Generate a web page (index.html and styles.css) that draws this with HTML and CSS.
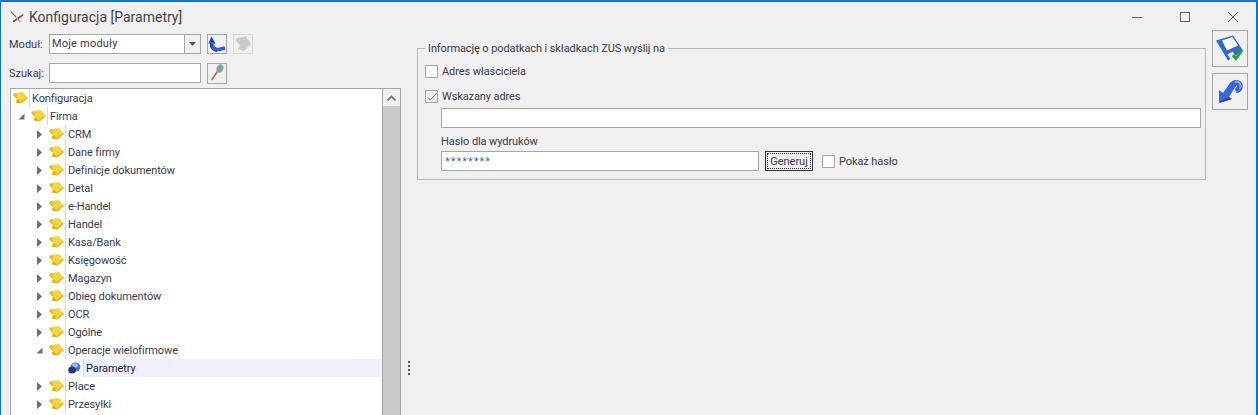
FILE: index.html
```html
<!DOCTYPE html>
<html lang="pl">
<head>
<meta charset="utf-8">
<title>Konfiguracja [Parametry]</title>
<link rel="stylesheet" href="styles.css">
</head>
<body>
<svg class="defs" width="0" height="0">
  <defs>
    <symbol id="folder" viewBox="0 0 15 12">
      <path d="M0 3 L2 1 L10 0 L15 6 L8.5 11.5 L3 10.5 L4 7 Z" fill="#f2d540"/>
      <path d="M0 3 L2 1 L3.5 2 L4 7 Z" fill="#d9bb3c"/>
      <path d="M3 10.5 L4 7 L5.5 8 L8.5 11.5 Z" fill="#cfae2e"/>
      <path d="M8.5 11.5 L15 6 L13.5 5 L8 9.5 Z" fill="#e2bf2c"/>
    </symbol>
    <symbol id="open" viewBox="0 0 7 7"><path d="M6.5 0.5 V6.5 H0.5 Z" fill="#6e6e6e"/></symbol>
    <symbol id="closed" viewBox="0 0 6 9"><path d="M0.5 0 L5.5 4.5 L0.5 9 Z" fill="#6e6e6e"/></symbol>
  </defs>
</svg>
<div class="window">
  <header class="titlebar">
    <svg class="app-icon" viewBox="0 0 14 14" width="14" height="14">
      <path d="M1 1 L6.5 6.5 L5.5 7.5 L0.5 2 Z" fill="#777"/>
      <path d="M2.5 11 L13 4 L13.5 5.5 L3.5 12.5 Z" fill="#84463a"/>
      <path d="M7 7.5 L11 11.5 L10 12.5 L6 8.5 Z" fill="#a89888"/>
    </svg>
    <span class="title">Konfiguracja [Parametry]</span>
    <div class="controls">
      <svg class="ctl" viewBox="0 0 10 10" width="10" height="10"><path d="M0 5.5 H10" stroke="#666" fill="none"/></svg>
      <svg class="ctl" viewBox="0 0 10 10" width="10" height="10"><rect x="0.5" y="0.5" width="9" height="9" stroke="#666" fill="none"/></svg>
      <svg class="ctl" viewBox="0 0 10 10" width="10" height="10"><path d="M0 0 L10 10 M10 0 L0 10" stroke="#666" fill="none"/></svg>
    </div>
  </header>
  <div class="content">
    <aside class="left">
      <div class="filter">
        <label class="flabel">Moduł:</label>
        <div class="combo"><span class="combo-text">Moje moduły</span><span class="combo-btn"><svg viewBox="0 0 7 4" width="7" height="4"><path d="M0 0 H7 L3.5 4 Z" fill="#555"/></svg></span></div>
        <button class="tool">
          <svg viewBox="0 0 18 18" width="18" height="18">
            <path d="M0.5 8.5 L3.5 1.5 L7.5 8.5 Z" fill="#1d3fa8"/>
            <path d="M3.8 7 C3.8 12.5 7 15 11 14.5 L17 13" stroke="#2f62d8" stroke-width="3.4" fill="none"/>
            <path d="M2.2 8 C2.4 13 5 16 9 16.4" stroke="#12286e" stroke-width="1.1" fill="none"/>
          </svg>
        </button>
        <button class="tool off">
          <svg viewBox="0 0 18 18" width="18" height="18"><path d="M1 5 L4 3 L12 1.5 L17 9 L10 16 L4 14 L6 10 Z" fill="#cacaca"/></svg>
        </button>
      </div>
      <div class="filter search">
        <label class="flabel">Szukaj:</label>
        <input class="field sfield" type="text">
        <button class="tool">
          <svg viewBox="0 0 18 20" width="18" height="20">
            <path d="M3.7 17 L9.7 8" stroke="#a5785a" stroke-width="1.7" fill="none"/>
            <ellipse cx="12" cy="5.5" rx="2.9" ry="3.8" transform="rotate(20 12 5.5)" fill="#55a9d0" stroke="#b9a468"/>
          </svg>
        </button>
      </div>
      <div class="tree">
        <div class="rows">
          <div class="row l0"><svg class="fold"><use href="#folder"/></svg><span class="txt">Konfiguracja</span></div>
          <div class="row l1"><svg class="arr"><use href="#open"/></svg><svg class="fold"><use href="#folder"/></svg><span class="txt">Firma</span></div>
          <div class="row l2"><svg class="arr"><use href="#closed"/></svg><svg class="fold"><use href="#folder"/></svg><span class="txt">CRM</span></div>
          <div class="row l2"><svg class="arr"><use href="#closed"/></svg><svg class="fold"><use href="#folder"/></svg><span class="txt">Dane firmy</span></div>
          <div class="row l2"><svg class="arr"><use href="#closed"/></svg><svg class="fold"><use href="#folder"/></svg><span class="txt">Definicje dokumentów</span></div>
          <div class="row l2"><svg class="arr"><use href="#closed"/></svg><svg class="fold"><use href="#folder"/></svg><span class="txt">Detal</span></div>
          <div class="row l2"><svg class="arr"><use href="#closed"/></svg><svg class="fold"><use href="#folder"/></svg><span class="txt">e-Handel</span></div>
          <div class="row l2"><svg class="arr"><use href="#closed"/></svg><svg class="fold"><use href="#folder"/></svg><span class="txt">Handel</span></div>
          <div class="row l2"><svg class="arr"><use href="#closed"/></svg><svg class="fold"><use href="#folder"/></svg><span class="txt">Kasa/Bank</span></div>
          <div class="row l2"><svg class="arr"><use href="#closed"/></svg><svg class="fold"><use href="#folder"/></svg><span class="txt">Księgowość</span></div>
          <div class="row l2"><svg class="arr"><use href="#closed"/></svg><svg class="fold"><use href="#folder"/></svg><span class="txt">Magazyn</span></div>
          <div class="row l2"><svg class="arr"><use href="#closed"/></svg><svg class="fold"><use href="#folder"/></svg><span class="txt">Obieg dokumentów</span></div>
          <div class="row l2"><svg class="arr"><use href="#closed"/></svg><svg class="fold"><use href="#folder"/></svg><span class="txt">OCR</span></div>
          <div class="row l2"><svg class="arr"><use href="#closed"/></svg><svg class="fold"><use href="#folder"/></svg><span class="txt">Ogólne</span></div>
          <div class="row l2"><svg class="arr"><use href="#open"/></svg><svg class="fold"><use href="#folder"/></svg><span class="txt">Operacje wielofirmowe</span></div>
          <div class="row l3">
            <svg class="leaf" viewBox="0 0 13 12" width="13" height="12">
              <ellipse cx="7.5" cy="5" rx="5" ry="4.5" fill="#4a74d8"/>
              <ellipse cx="7" cy="3.5" rx="3" ry="2.2" fill="#9db8f0"/>
              <ellipse cx="4" cy="8" rx="3.8" ry="3.5" fill="#1f3a80"/>
            </svg>
            <span class="txt sel">Parametry</span>
          </div>
          <div class="row l2"><svg class="arr"><use href="#closed"/></svg><svg class="fold"><use href="#folder"/></svg><span class="txt">Płace</span></div>
          <div class="row l2"><svg class="arr"><use href="#closed"/></svg><svg class="fold"><use href="#folder"/></svg><span class="txt">Przesyłki</span></div>
        </div>
        <div class="scroll">
          <div class="scroll-up"><svg viewBox="0 0 9 6" width="9" height="6"><path d="M0.5 5.5 L4.5 1.5 L8.5 5.5" stroke="#777" stroke-width="1.8" fill="none"/></svg></div>
        </div>
      </div>
    </aside>
    <div class="splitter"><i></i><i></i><i></i><i></i></div>
    <main class="right">
      <fieldset class="group">
        <legend class="legend">Informację o podatkach i składkach ZUS wyślij na</legend>
        <div class="check first"><span class="box"></span><span class="clabel">Adres właściciela</span></div>
        <div class="check second">
          <span class="box"><svg viewBox="0 0 12 12" width="12" height="12"><path d="M2 6.5 L4.5 9 L10.5 2" stroke="#777" fill="none"/></svg></span>
          <span class="clabel">Wskazany adres</span>
        </div>
        <input class="field wide" type="text">
        <div class="plabel">Hasło dla wydruków</div>
        <div class="pass-row">
          <input class="field pass" type="text" value="********">
          <button class="gen"><span class="gen-in">Generuj</span></button>
          <div class="check show"><span class="box"></span><span class="clabel">Pokaż hasło</span></div>
        </div>
      </fieldset>
      <div class="actions">
        <button class="act">
          <svg viewBox="0 0 30 30" width="30" height="30">
            <path d="M1 6.5 L18 1.5 L28 16.5 L13 26.5 Z" fill="#3566d6"/>
            <path d="M7 6.5 L17.5 3 L23 11.5 L12 16.5 Z" fill="#fff"/>
            <path d="M12.5 20.5 L17.5 17.5 L20.5 21.5 L15.5 25 Z" fill="#e8eefc"/>
            <path d="M18 21 L21 24.5 L27 16" stroke="#1fa82a" stroke-width="3" fill="none"/>
          </svg>
        </button>
        <button class="act">
          <svg viewBox="0 0 30 30" width="30" height="30">
            <path d="M4 26 L4 13 L8 16 L15 6 C18 2 25 2 27 6 C29 10 27 14 24 15.5 L21 16 L20 11 C22 11 23 8 21 9 L14 20 L17 22 Z" fill="#3a67d6"/>
            <path d="M20 4 C24 3 27 6 26.5 10 L24 13 L24.5 8 C24.5 6 22 5.5 20 6 Z" fill="#86a6ee"/>
            <path d="M4 26 L17 22 L14 20 L6 24 Z" fill="#2347a8"/>
          </svg>
        </button>
      </div>
    </main>
  </div>
</div>
</body>
</html>
```
FILE: styles.css
```css
* { box-sizing: border-box; }
html, body { margin: 0; padding: 0; height: 415px; overflow: hidden; }
body { font-family: Roboto, sans-serif; font-size: 11px; letter-spacing: -0.1px; color: #3a3a4a; background: #f0f0f0; }
.defs { display: block; height: 0; }
.window { height: 415px; border: 2px solid #0078d7; border-bottom: 0; border-left-width: 1px; background: #f0f0f0; overflow: hidden; }

.titlebar { display: flex; align-items: center; height: 29px; padding-left: 9px; }
.app-icon { margin-right: 5px; }
.title { font-size: 14px; letter-spacing: 0; color: #444; }
.controls { margin-left: auto; display: flex; gap: 38px; padding-right: 18px; }
.ctl { display: block; }

.content { display: flex; height: 384px; }
.left { width: 400px; padding: 3px 0 0 8px; flex: none; }
.filter { display: flex; align-items: center; height: 20px; }
.search { margin-top: 9px; }
.flabel { width: 40px; flex: none; letter-spacing: 0; }
.combo { width: 152px; height: 20px; display: flex; background: #fff; border: 1px solid #a6a6a6; margin-right: 6px; }
.combo-text { flex: 1; padding-left: 2px; line-height: 17px; letter-spacing: 0.2px; }
.combo-btn { width: 16px; border-left: 1px solid #a6a6a6; background: #f0f0f0; display: flex; align-items: center; justify-content: center; }
.field { border: 1px solid #a6a6a6; background: #fff; padding: 0 3px; font: inherit; color: #3f74b4; height: 20px; display: block; outline: none; }
.sfield { width: 152px; margin-right: 6px; }
.tool { width: 20px; height: 20px; padding: 0; border: 1px solid #a6a6a6; background: #f0f0f0; display: flex; align-items: center; justify-content: center; margin-right: 6px; }
.search .tool { height: 21px; }
.tool.off { border-color: #d9d9d9; }

.tree { display: flex; margin: 5px 0 0 1px; height: 330px; border: 1px solid #a6a6a6; border-bottom: 0; background: #fff; }
.rows { flex: 1; min-width: 0; }
.row { display: flex; align-items: center; height: 18px; }
.l0 { padding-left: 2px; }
.l1 { padding-left: 7px; }
.l2 { padding-left: 25px; }
.l3 { padding-left: 57px; }
.arr { width: 7px; height: 9px; margin-right: 6px; flex: none; }
.fold { width: 15px; height: 12px; flex: none; margin-right: 1px; }
.leaf { margin-right: 2px; flex: none; }
.txt { flex: 1; align-self: stretch; border-left: 1px solid #d8d8d8; padding-left: 2px; line-height: 19px; white-space: nowrap; }
.sel { background: #eef1fd; color: #223; border-left-color: #d4d8e8; }
.scroll { width: 18px; flex: none; background: #c8c8c8; border-left: 1px solid #a6a6a6; }
.scroll-up { height: 17px; background: #f0f0f0; display: flex; align-items: center; justify-content: center; }

.splitter { width: 16px; flex: none; display: flex; flex-direction: column; align-items: center; gap: 2px; padding: 330px 3px 0 0; margin-left: 1px; }
.splitter i { width: 2px; height: 2px; background: #555; display: block; }

.right { flex: 1; display: flex; align-items: flex-start; min-width: 0; }
.group { width: 789px; height: 140px; margin: 9px 0 0 -1px; padding: 0 4px 0 7px; border: 1px solid #b9b9b9; min-width: 0; }
.legend { padding: 2px 3px 0; margin-left: 0; line-height: 14px; }
.check { display: flex; align-items: center; gap: 4px; height: 14px; }
.clabel { padding-top: 1px; }
.box { width: 13px; height: 13px; border: 1px solid #a6a6a6; background: #fff; display: block; flex: none; }
.box svg { display: block; }
.first { margin-top: 8px; }
.second { margin-top: 11px; }
.second .box { background: #f0f0f0; }
.wide { width: 760px; margin: 5px 0 0 16px; }
.plabel { margin: 5px 0 0 16px; line-height: 17px; }
.pass-row { display: flex; align-items: center; margin: 1px 0 0 16px; }
.pass { width: 318px; letter-spacing: 1px; }
.gen { width: 48px; height: 20px; margin-left: 6px; padding: 1px; border: 1px solid #333; background: #f0f0f0; font: inherit; color: inherit; }
.gen-in { display: flex; align-items: center; justify-content: center; height: 100%; outline: 1px dotted #333; outline-offset: -1px; }
.show { margin-left: 9px; }

.actions { display: flex; flex-direction: column; gap: 6px; margin: -1px 0 0 6px; }
.act { width: 36px; height: 37px; padding: 0; background: #f0f0f0; border: 1px solid #a6a6a6; display: flex; align-items: center; justify-content: center; }
```
